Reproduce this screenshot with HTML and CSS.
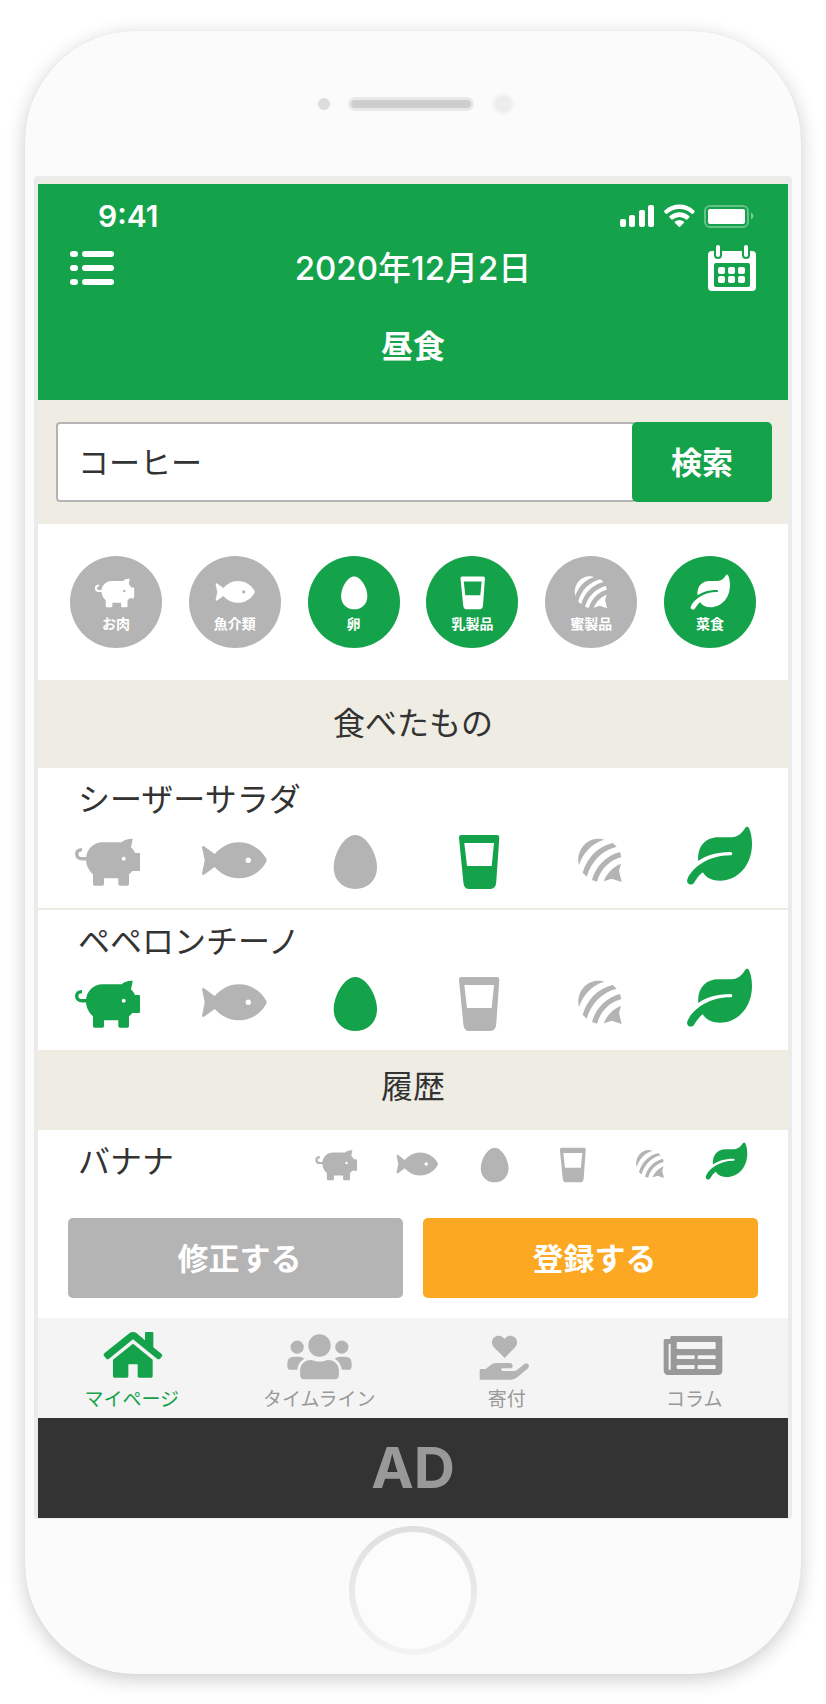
FILE: index.html
```html
<!DOCTYPE html>
<html lang="ja">
<head>
<meta charset="utf-8">
<meta name="viewport" content="width=device-width, initial-scale=1">
<title>昼食</title>
<link rel="stylesheet" href="styles.css">
</head>
<body>
<svg class="defs" aria-hidden="true">
  <defs>
    <g id="pig">
      <path d="M12 23.6C8.5 23.6 6.7 25.5 6.7 28C6.7 31 9 32.8 12 32.8H18" fill="none" stroke="currentColor" stroke-width="3.4"/>
      <path fill-rule="evenodd" d="M32.7 16.3H51.7C54 13.8 58 12.6 62.8 12.8L61 21.3Q63.4 23.5 65 27H69Q70 27 70 28V44Q70 45 69 45H62.3Q61 47 59 48.3V58Q59 59.7 57.4 59.7H50Q48.3 59.7 48.3 58V52.3H34V58Q34 59.7 32.4 59.7H24.7Q23 59.7 23 58V48.3C18.5 44.5 16 39 16 33C16 23.5 23.5 16.3 32.7 16.3ZM53.7 30.7A2 2 0 1 0 53.7 34.7A2 2 0 1 0 53.7 30.7Z"/>
    </g>
    <path id="fish" fill-rule="evenodd" d="M10 21.2Q10.3 19.4 12.4 20.4L22.7 28C29 21 37 16.3 46.7 16.3C59 16.3 69 23 74.2 32.6Q75 34.3 74.2 36C69 45.6 59 52.3 46.7 52.3C37 52.3 29 48 22.7 41L12.4 48.6Q10.3 49.6 10 47.8L12.7 34.3ZM56.3 31.6A2.7 2.7 0 1 0 56.3 37A2.7 2.7 0 1 0 56.3 31.6Z"/>
    <path id="egg" d="M41.3 9C52 9 63 27 63 41.3C63 54.5 53.5 63 41.3 63C29.2 63 19.7 54.5 19.7 41.3C19.7 27 30.5 9 41.3 9Z"/>
    <path id="cup" fill-rule="evenodd" d="M25.5 9H60.8Q63.4 9 63.3 12L60.2 56.5Q59.7 63 54.5 63H32.5Q28 63 27.4 56.5L23 12Q22.9 9 25.5 9ZM28.3 17L31 40H55.7L58 17Z"/>
    <path id="honey" d="M21 39C17.5 25 28 11.5 42 12.7L46.3 13.7C34 17 25 27 21 39ZM24.7 46.7C29 32 39 21 54.7 17L58.7 20.7C44 24 33 36 28.7 50.7ZM34 54C37.5 41 47 30 62 26L63.3 31C52 34 42.5 43 39 55.7ZM45.7 55.3C49 47 55 41 63 37.7L61 45L63.7 56L53.7 52.7Z"/>
    <path id="leaf" d="M18.3 35C17 20 26 11.3 38.3 11.3H51.7C58 11 62 7 65.3 1.7C66.3.2 68.3.4 69.3 2.7C71 7 72 12 72 18.3C72 39 58 54.7 40 54.7C32 54.7 26.5 52 22.7 46.3C19 49 16.5 53 13.9 57C11 60.5 5.5 57.5 7.5 53C12 42 28 29.3 50.5 29.3C52.8 29.3 52.8 26 50.5 26C36 26 26 29.5 18.3 35Z"/>
  </defs>
</svg>

<div class="phone">
  <div class="sensors">
    <span class="dot"></span>
    <span class="speaker"></span>
    <span class="camera"></span>
  </div>

  <div class="bezel">
    <div class="screen">
      <header class="header">
        <div class="status">
          <span class="time">9:41</span>
          <svg class="status-icons" viewBox="0 0 134 24" aria-hidden="true">
            <rect x="0" y="15" width="6" height="8" rx="2"/>
            <rect x="9" y="11" width="6" height="12" rx="2"/>
            <rect x="19" y="6" width="6" height="17" rx="2"/>
            <rect x="28" y="1" width="6" height="22" rx="2"/>
            <path d="M44.6 8.6Q43.4 7.4 44.6 6.4Q51 .5 59.4 .5T74.2 6.4Q75.4 7.4 74.2 8.6L73 9.8Q72.4 10.3 71.8 9.8Q66.5 5 59.4 5T47 9.8Q46.4 10.3 45.8 9.8ZM49.5 13.5Q48.8 12.8 49.5 12.1Q53.8 8.3 59.4 8.3T69.3 12.1Q70 12.8 69.3 13.5L67.2 15.5Q66.6 16 66 15.5Q63.2 13 59.4 13T52.8 15.5Q52.2 16 51.6 15.5ZM54.8 18.7Q54.2 18 55 17.5Q57 16 59.4 16T63.8 17.5Q64.6 18 64 18.7L60 22.7Q59.4 23.2 58.8 22.7Z"/>
            <rect x="85" y="2" width="43" height="21" rx="5" fill="none" stroke="currentColor" stroke-width="2" opacity=".35"/>
            <rect x="88" y="5" width="37" height="15" rx="2"/>
            <path d="M131 8.5Q133.4 9.6 133.4 12T131 15.5Z" opacity=".45"/>
          </svg>
        </div>
        <div class="titlebar">
          <button class="icon-button" type="button" aria-label="メニュー">
            <svg class="list-icon" viewBox="0 0 44 34" aria-hidden="true">
              <rect width="8" height="6" rx="3"/><rect x="12" width="32" height="6" rx="3"/>
              <rect y="14" width="8" height="6" rx="3"/><rect x="12" y="14" width="32" height="6" rx="3"/>
              <rect y="28" width="8" height="6" rx="3"/><rect x="12" y="28" width="32" height="6" rx="3"/>
            </svg>
          </button>
          <h1 class="date">2020年12月2日</h1>
          <button class="icon-button" type="button" aria-label="カレンダー">
            <svg class="calendar-icon" viewBox="0 0 48 46" aria-hidden="true">
              <rect y="6" width="48" height="40" rx="4"/>
              <g class="cut">
                <rect x="6" y="18" width="36" height="24" rx="2"/>
                <rect x="6" y="-3" width="8" height="17" rx="4"/>
                <rect x="34" y="-3" width="8" height="17" rx="4"/>
              </g>
              <rect x="8" y="0" width="4" height="12" rx="2"/>
              <rect x="36" y="0" width="4" height="12" rx="2"/>
              <rect x="10" y="22" width="7" height="7" rx="2"/><rect x="20" y="22" width="7" height="7" rx="2"/><rect x="30" y="22" width="7" height="7" rx="2"/>
              <rect x="10" y="31" width="7" height="7" rx="2"/><rect x="20" y="31" width="7" height="7" rx="2"/><rect x="30" y="31" width="7" height="7" rx="2"/>
            </svg>
          </button>
        </div>
        <p class="meal">昼食</p>
      </header>

      <form class="search">
        <input class="search-input" type="text" value="コーヒー" aria-label="食べ物を検索">
        <button class="search-button" type="button">検索</button>
      </form>

      <div class="filters">
        <button class="filter" type="button" aria-pressed="false"><svg viewBox="2 0 76 64" aria-hidden="true"><use href="#pig"/></svg>お肉</button>
        <button class="filter" type="button" aria-pressed="false"><svg viewBox="4 0 76 64" aria-hidden="true"><use href="#fish"/></svg>魚介類</button>
        <button class="filter on" type="button" aria-pressed="true"><svg viewBox="3 0 76 64" aria-hidden="true"><use href="#egg"/></svg>卵</button>
        <button class="filter on" type="button" aria-pressed="true"><svg viewBox="4 0 76 64" aria-hidden="true"><use href="#cup"/></svg>乳製品</button>
        <button class="filter" type="button" aria-pressed="false"><svg viewBox="11 6 62 52" aria-hidden="true"><use href="#honey"/></svg>蜜製品</button>
        <button class="filter on" type="button" aria-pressed="true"><svg viewBox="1 -5 76 64" aria-hidden="true"><use href="#leaf"/></svg>菜食</button>
      </div>

      <h2 class="section-title">食べたもの</h2>
      <ul class="meals">
        <li class="food">
          <h3 class="food-name">シーザーサラダ</h3>
          <div class="marks">
            <svg class="mark" viewBox="0 0 76 64" aria-hidden="true"><use href="#pig"/></svg>
            <svg class="mark" viewBox="0 0 76 64" aria-hidden="true"><use href="#fish"/></svg>
            <svg class="mark" viewBox="0 0 76 64" aria-hidden="true"><use href="#egg"/></svg>
            <svg class="mark on" viewBox="0 0 76 64" aria-hidden="true"><use href="#cup"/></svg>
            <svg class="mark" viewBox="0 0 76 64" aria-hidden="true"><use href="#honey"/></svg>
            <svg class="mark on" viewBox="0 0 76 64" aria-hidden="true"><use href="#leaf"/></svg>
          </div>
        </li>
        <li class="food">
          <h3 class="food-name">ペペロンチーノ</h3>
          <div class="marks">
            <svg class="mark on" viewBox="0 0 76 64" aria-hidden="true"><use href="#pig"/></svg>
            <svg class="mark" viewBox="0 0 76 64" aria-hidden="true"><use href="#fish"/></svg>
            <svg class="mark on" viewBox="0 0 76 64" aria-hidden="true"><use href="#egg"/></svg>
            <svg class="mark" viewBox="0 0 76 64" aria-hidden="true"><use href="#cup"/></svg>
            <svg class="mark" viewBox="0 0 76 64" aria-hidden="true"><use href="#honey"/></svg>
            <svg class="mark on" viewBox="0 0 76 64" aria-hidden="true"><use href="#leaf"/></svg>
          </div>
        </li>
      </ul>

      <h2 class="section-title history-title">履歴</h2>
      <div class="history">
        <h3 class="food-name">バナナ</h3>
        <div class="marks small">
          <svg class="mark" viewBox="0 0 76 64" aria-hidden="true"><use href="#pig"/></svg>
          <svg class="mark" viewBox="0 0 76 64" aria-hidden="true"><use href="#fish"/></svg>
          <svg class="mark" viewBox="0 0 76 64" aria-hidden="true"><use href="#egg"/></svg>
          <svg class="mark" viewBox="0 0 76 64" aria-hidden="true"><use href="#cup"/></svg>
          <svg class="mark" viewBox="0 0 76 64" aria-hidden="true"><use href="#honey"/></svg>
          <svg class="mark on" viewBox="0 0 76 64" aria-hidden="true"><use href="#leaf"/></svg>
        </div>
      </div>

      <div class="actions">
        <button class="action edit" type="button">修正する</button>
        <button class="action register" type="button">登録する</button>
      </div>

      <nav class="tabs">
        <a class="tab current" href="#mypage" aria-current="page">
          <svg viewBox="208 66 198 150" aria-hidden="true">
            <path d="M224 139Q219 134 225 129L299 70Q310 62 321 70L346 91V69Q346 66 349 66H368Q371 66 371 69V112L395 131Q400 135 396 140L391 146Q387 150 382 146L310 88L238 146Q233 150 230 146Z"/>
            <path d="M310 101L369 149V199Q369 203 365 203H328Q324 203 324 199V163H296V199Q296 203 292 203H254Q250 203 250 199V149Z"/>
          </svg>
          マイページ
        </a>
        <a class="tab" href="#timeline">
          <svg class="pale" viewBox="769 66 201 150" aria-hidden="true">
            <circle cx="871" cy="106" r="34"/><circle cx="803" cy="111" r="20"/><circle cx="939" cy="111" r="20"/>
            <path d="M845 150C850 150 856 155 871 155C886 155 892 150 897 150C916 150 930 163 930 182V196Q930 209 917 209H825Q812 209 812 196V182C812 163 826 150 845 150Z"/>
            <path d="M793 140H808Q818 140 825 146C812 153 805 165 803 180H784Q773 180 773 169V160Q773 140 793 140Z"/>
            <path d="M949 140H934Q924 140 917 146C930 153 937 165 939 180H958Q969 180 969 169V160Q969 140 949 140Z"/>
          </svg>
          タイムライン
        </a>
        <a class="tab" href="#donate">
          <svg class="pale" viewBox="193 66 198 150" aria-hidden="true">
            <path d="M285 144L254 113C243 102 246 88 254 82C263 74 277 76 284 87C291 76 306 74 315 82C323 89 326 102 315 113Z"/>
            <path d="M213 177H228L243 165Q250 159 259 159H301Q309 160 309 167Q309 175 301 175H278Q275 175 275 179Q275 183 279 183H313Q318 183 322 180L344 162Q351 157 356 163Q360 169 355 175L324 201Q313 209 304 209H213Q210 209 210 206V180Q210 177 213 177Z"/>
          </svg>
          寄付
        </a>
        <a class="tab" href="#column">
          <svg viewBox="754 66 198 150" aria-hidden="true">
            <path fill-rule="evenodd" d="M787 78H934Q938 78 938 82V182Q938 195 925 195H776Q762 195 762 181V92Q762 87 767 87H782V82Q782 78 787 78ZM777 104V177Q777 180 780 180T783 177V104Q783 101 780 101T777 104ZM804 96Q801 96 801 99V114Q801 117 804 117H915Q918 117 918 114V99Q918 96 915 96ZM804 136Q801 136 801 139V144Q801 147 804 147H852Q855 147 855 144V139Q855 136 852 136ZM867 136Q864 136 864 139V144Q864 147 867 147H915Q918 147 918 144V139Q918 136 915 136ZM804 165Q801 165 801 168V174Q801 177 804 177H852Q855 177 855 174V168Q855 165 852 165ZM867 165Q864 165 864 168V174Q864 177 867 177H915Q918 177 918 174V168Q918 165 915 165Z"/>
          </svg>
          コラム
        </a>
      </nav>

      <aside class="ad">AD</aside>
    </div>
  </div>

  <div class="home"></div>
</div>
</body>
</html>
```

FILE: styles.css
```css
:root {
  --green: #14a24a;
  --grey: #b4b4b4;
  --beige: #efece4;
  --text: #333;
}

* { box-sizing: border-box; }

body {
  margin: 0;
  padding: 31px 25px 30px;
  background: #fff;
  color: var(--text);
  font-family: Inter, "Noto Sans CJK JP", sans-serif;
}

h1, h2, h3, p, ul { margin: 0; padding: 0; font-weight: 400; }
ul { list-style: none; }
button, input { font-family: inherit; margin: 0; }
button { border: 0; cursor: pointer; }
svg { display: block; fill: currentColor; }
.defs { position: absolute; width: 0; height: 0; }

.phone {
  display: flex;
  flex-direction: column;
  padding: 0 9px 19px;
  border-radius: 110px;
  background: #fbfbfb;
  box-shadow: 0 0 1px rgba(0, 0, 0, .1), 0 5px 20px rgba(0, 0, 0, .2);
}

.sensors {
  display: flex;
  justify-content: center;
  align-items: center;
  gap: 18px;
  height: 145px;
  padding-left: 6px;
}
.dot { width: 12px; height: 12px; border-radius: 50%; background: #dcdcdc; }
.speaker { width: 126px; height: 14px; border: 3px solid #e9e9e9; border-radius: 7px; background: #cecece; }
.camera { width: 22px; height: 22px; border: 3px solid #f4f4f4; border-radius: 50%; background: #ededed; }

.bezel { padding: 4px 4px 0; border-radius: 4px; background: #ebebeb; }
.screen { border-top: 4px solid var(--beige); border-bottom: 1px solid var(--beige); background: #fff; }

.header { padding: 12px 32px 24px; background: var(--green); color: #fff; }
.status {
  display: flex;
  justify-content: space-between;
  align-items: center;
  height: 40px;
  padding: 0 2px 0 28px;
}
.time { font-size: 30px; font-weight: 600; }
.status-icons { width: 134px; height: 24px; }
.titlebar { display: flex; justify-content: space-between; align-items: center; height: 64px; }
.icon-button { padding: 0; background: none; color: inherit; }
.list-icon { width: 44px; height: 34px; }
.calendar-icon { width: 48px; height: 46px; }
.cut { fill: var(--green); }
.date { padding-left: 4px; font-size: 33px; font-weight: 500; line-height: 48px; }
.meal { margin-top: 17px; font-size: 32px; font-weight: 700; line-height: 59px; text-align: center; }

.search { display: flex; padding: 22px 16px 22px 18px; background: var(--beige); }
.search-input {
  flex: 1;
  min-width: 0;
  height: 80px;
  margin-right: -4px;
  padding: 0 20px 4px;
  border: 2px solid var(--grey);
  border-radius: 4px;
  background: #fff;
  color: var(--text);
  font-size: 31px;
}
.search-button {
  position: relative;
  width: 140px;
  padding: 0 0 4px;
  border-radius: 5px;
  background: var(--green);
  color: #fff;
  font-size: 31px;
  font-weight: 700;
}

.filters { display: flex; justify-content: space-between; padding: 32px; }
.filter {
  display: flex;
  flex-direction: column;
  align-items: center;
  gap: 6px;
  width: 92px;
  height: 92px;
  padding: 15px 0 0;
  border-radius: 50%;
  background: var(--grey);
  color: #fff;
  font-size: 14px;
  font-weight: 700;
  line-height: 16px;
}
.filter.on { background: var(--green); }
.filter svg { width: 46px; height: 39px; }

.section-title { background: var(--beige); font-size: 32px; line-height: 88px; text-align: center; }
.history-title { padding-bottom: 6px; line-height: 74px; }

.food { padding: 8px 32px 18px; }
.food + .food { border-top: 2px solid var(--beige); }
.food-name { padding-left: 8px; font-size: 32px; line-height: 48px; }
.marks { display: flex; justify-content: space-between; margin-top: 2px; color: var(--grey); }
.mark { width: 76px; height: 64px; }
.mark.on { color: var(--green); }

.history {
  display: grid;
  grid-template-columns: 7fr 13fr;
  align-items: center;
  height: 64px;
  padding: 0 38px 0 32px;
}
.history .food-name { white-space: nowrap; }
.marks.small { margin: 0 0 0 4px; }
.marks.small .mark { width: 49px; height: 41px; }

.actions { display: flex; gap: 20px; padding: 24px 30px 20px; }
.action { flex: 1; height: 80px; padding: 0 0 4px 8px; border-radius: 5px; color: #fff; font-size: 31px; font-weight: 700; }
.edit { background: var(--grey); }
.register { background: #fca822; }

.tabs { display: flex; height: 100px; background: #f4f4f4; }
.tab {
  flex: 1;
  display: flex;
  flex-direction: column;
  align-items: center;
  gap: 4px;
  padding-top: 14px;
  color: #999;
  font-size: 19px;
  line-height: 28px;
  text-decoration: none;
}
.tab svg { width: 66px; height: 50px; }
.tab.current { color: var(--green); }
.tab .pale { color: var(--grey); }

.ad {
  background: #333;
  color: #999;
  font-size: 57px;
  font-weight: 700;
  line-height: 100px;
  text-align: center;
}

.home {
  align-self: center;
  width: 128px;
  height: 129px;
  margin-top: 7px;
  border: 6px solid transparent;
  border-radius: 50%;
  background: linear-gradient(#fcfcfc, #fcfcfc) padding-box, linear-gradient(#dfdfdf, #f3f3f3) border-box;
}
```
